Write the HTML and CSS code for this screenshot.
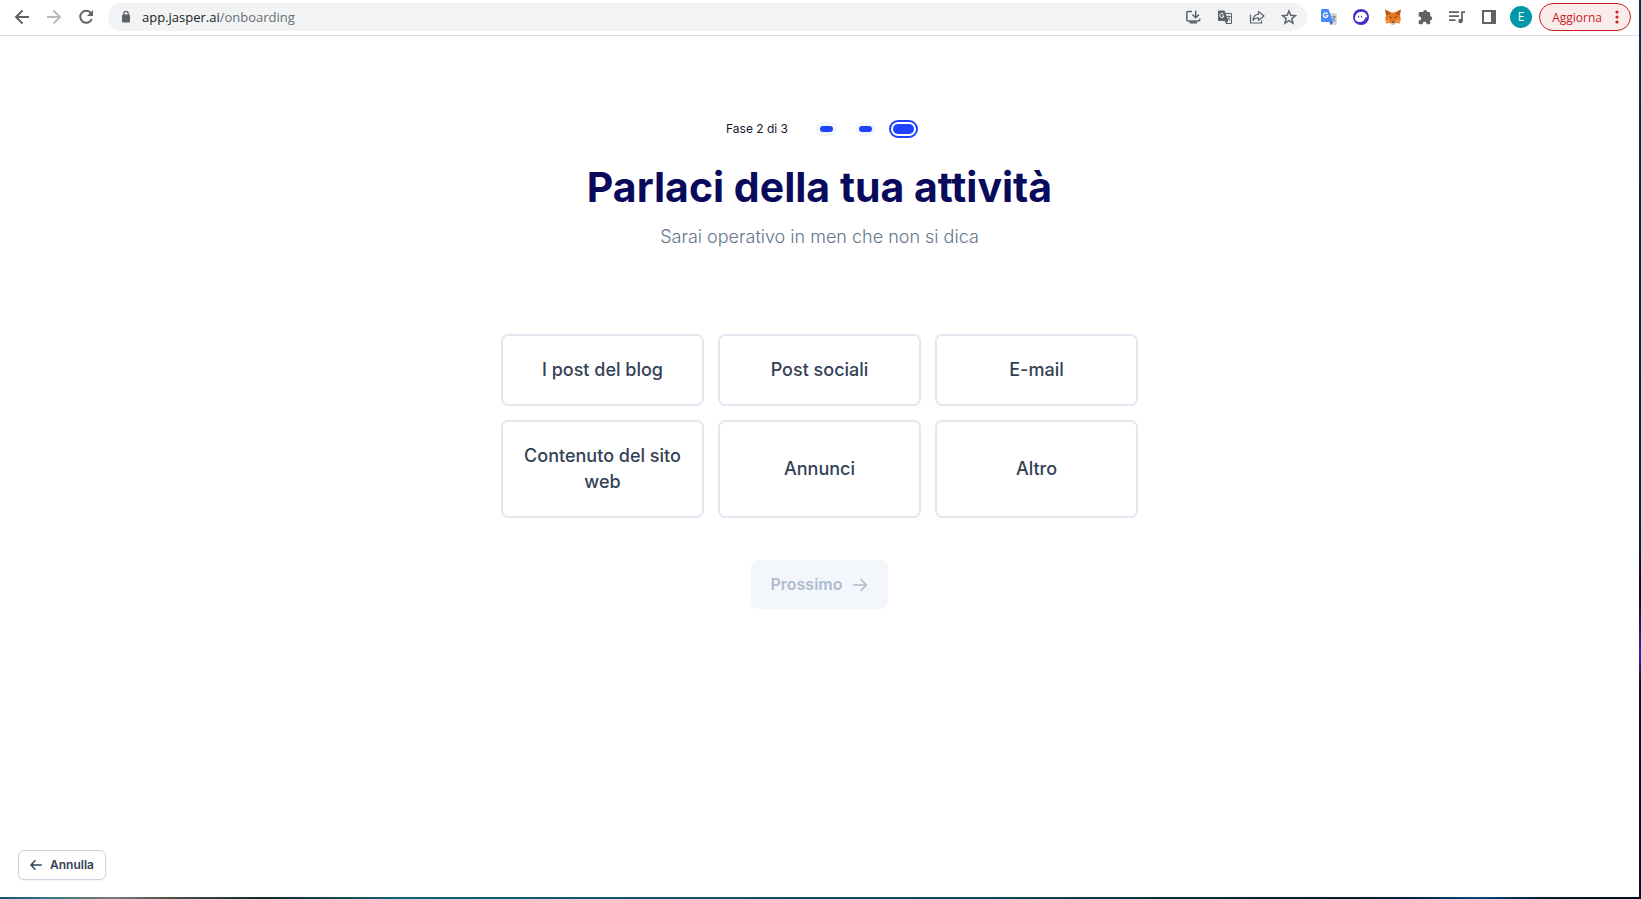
FILE: index.html
```html
<!DOCTYPE html>
<html lang="it">
<head>
<meta charset="utf-8">
<meta name="viewport" content="width=device-width, initial-scale=1">
<title>Jasper onboarding</title>
<link rel="stylesheet" href="styles.css">
</head>
<body>
<div class="desktop">
  <div class="window">
    <header class="toolbar">
      <nav class="group" aria-label="Navigazione">
        <button class="tool" type="button" aria-label="Indietro"><svg width="16" height="16" viewBox="0 0 16 16" fill="none" stroke="#5f6368" stroke-width="2"><path d="M15 8H2.5M8.5 1.5L2 8l6.500 6.500"/></svg></button>
        <button class="tool" type="button" aria-label="Avanti"><svg width="16" height="16" viewBox="0 0 16 16" fill="none" stroke="#babcbe" stroke-width="2"><path d="M1 8h12.500M7.500 1.500L14 8l-6.500 6.500"/></svg></button>
        <button class="tool" type="button" aria-label="Ricarica"><svg width="16" height="16" viewBox="0 0 16 16"><path d="M13.200 4.500A6 6 0 1 0 13.800 10" fill="none" stroke="#5f6368" stroke-width="2"/><path d="M15 1v6H9z" fill="#5f6368"/></svg></button>
      </nav>
      <div class="address">
        <svg class="lock" width="12" height="14" viewBox="0 0 12 14"><rect x="2" y="4.500" width="8" height="8" rx="1" fill="#5f6368"/><path d="M3.800 5V3.500a2.200 2.200 0 0 1 4.400 0V5" fill="none" stroke="#5f6368" stroke-width="1.300"/></svg>
        <a class="url" href="#">app.jasper.ai<span class="path">/onboarding</span></a>
        <div class="group">
          <button class="tool" type="button" aria-label="Installa"><svg width="16" height="16" viewBox="0 0 16 16" fill="none" stroke="#5f6368" stroke-width="1.500"><path d="M7 2.500H3a1.200 1.200 0 0 0-1.200 1.200v7A1.200 1.200 0 0 0 3 11.900h10.500a1.200 1.200 0 0 0 1.200-1.200V9.500M10.700 1.500v7M7.500 5.600l3.200 3.200 3.200-3.200"/><path d="M4.500 13.500h7.500" stroke-width="2"/></svg></button>
          <button class="tool" type="button" aria-label="Traduci"><svg width="16" height="16" viewBox="0 0 16 16"><path d="M2 1.500h5.500l1 2.500H14a1 1 0 0 1 1 1v9a1 1 0 0 1-1 1H9l-1.200-3H2a1 1 0 0 1-1-1v-8.500a1 1 0 0 1 1-1z" fill="#5f6368"/><path d="M8.900 5H14v9H9.800l1.500-2.200z" fill="#f1f3f4"/><path d="M6.600 5.300A2.100 2.100 0 1 0 6.900 7H5" fill="none" stroke="#f1f3f4" stroke-width="1"/><path d="M9.800 7.500h4M11.700 6.500v1M12.900 7.500c-.5 1.800-1.300 2.800-2 3.600M10.700 8.500l2.500 3" fill="none" stroke="#5f6368" stroke-width=".9"/></svg></button>
          <button class="tool" type="button" aria-label="Condividi"><svg width="16" height="16" viewBox="0 0 16 16" fill="none" stroke="#5f6368" stroke-width="1.200"><path d="M1.500 5.500V14h11v-2.500"/><path d="M9.500 2.500L15 7l-5.500 4.300V8.800C7 8.700 5.300 9.500 4 11.300 4.300 8 6.200 5.500 9.500 5.100z" stroke-linejoin="round"/></svg></button>
          <button class="tool" type="button" aria-label="Preferiti"><svg width="16" height="16" viewBox="0 0 16 16" fill="none" stroke="#5f6368" stroke-width="1.500"><path d="M8 2l1.800 4.200 4.600.4-3.500 3 1.100 4.500L8 11.700l-4 2.400 1.100-4.500-3.500-3 4.600-.4z"/></svg></button>
        </div>
      </div>
      <div class="group">
        <button class="tool" type="button" aria-label="Google Traduttore"><svg width="16" height="16" viewBox="0 0 16 16"><path d="M6 4h9a1 1 0 0 1 1 1v10a1 1 0 0 1-1 1H9.500z" fill="#d5d8dc"/><path d="M9.500 16l3-3h-4z" fill="#3367d6"/><path d="M1 0h6.500l4.500 13H1a1 1 0 0 1-1-1V1a1 1 0 0 1 1-1z" fill="#4a8af4"/><path d="M6.500 5A2.200 2.200 0 1 0 6.800 6.500H4.900" fill="none" stroke="#fff" stroke-width="1.200"/><path d="M10.800 7.800h4M12.500 6.500v1.300M13.900 7.800c-.6 2.300-1.500 3.300-2.400 4.200M11.500 9l2.800 3.700" fill="none" stroke="#607d8b" stroke-width="1"/></svg></button>
        <button class="tool" type="button" aria-label="Phantom"><svg width="16" height="16" viewBox="0 0 16 16"><circle cx="8" cy="8" r="8" fill="#4c2bc4"/><path d="M2 9.500C2 5.500 4.700 2.700 8.200 2.700s5.600 2.300 5.900 4.800c.1.700-.3 1-.9 1h-.8c-.5 2.500-2.500 4.500-5.500 4.500C4 13 2 11.800 2 9.500z" fill="#fff"/><path d="M5.600 6.800v1.700M8.500 6.800v1.700" stroke="#4c2bc4" stroke-width="1.100"/></svg></button>
        <button class="tool" type="button" aria-label="MetaMask"><svg width="16" height="16" viewBox="0 0 16 16"><path d="M.3.500L6 3.500h4L15.700.5 15 6l.8 4.500-1.300 4-3.500-.8-1.500 1.800h-3L5 13.700l-3.500.8-1.300-4L1 6z" fill="#e8791c"/><path d="M.3.500L6 4 4.200 5.700 1 6zM15.700.5L10 4l1.800 1.700L15 6z" fill="#b9541c"/><path d="M1 10.500h3.700l.5 3-3.700 1zM15 10.500h-3.700l-.5 3 3.700 1z" fill="#f6953a"/><path d="M4 7.300l2.500 1-.3 1.300zM12 7.300l-2.500 1 .3 1.300z" fill="#30281f"/><path d="M6.200 12.500h3.600l.2 1.800-1 1H7l-1-1z" fill="#d5c5b8"/><path d="M6.700 12.500h2.600v1.200H6.700z" fill="#252525"/></svg></button>
        <button class="tool" type="button" aria-label="Estensioni"><svg width="16" height="16" viewBox="0 0 16 16"><path d="M3 3h3.200a2 2 0 0 1 4 0H12a1.200 1.200 0 0 1 1.200 1.200v3a2 2 0 0 1 0 4v3A1.200 1.200 0 0 1 12 15.300H9.600v-.6a2 2 0 0 0-4 0v.6H3A1.300 1.300 0 0 1 1.700 14v-2.600h.5a2 2 0 0 0 0-4h-.5V4.300A1.300 1.300 0 0 1 3 3z" fill="#5f6368"/></svg></button>
        <button class="tool" type="button" aria-label="Controlli multimediali"><svg width="16" height="16" viewBox="0 0 16 16"><path d="M0 3.200h10M0 7.200h10M0 11.200h6.500" stroke="#5f6368" stroke-width="1.700"/><path d="M16 3.200h-3v9" fill="none" stroke="#5f6368" stroke-width="1.700"/><circle cx="11.500" cy="12" r="2.200" fill="#5f6368"/></svg></button>
        <button class="tool" type="button" aria-label="Riquadro laterale"><svg width="16" height="16" viewBox="0 0 16 16"><path d="M1 1h14v14H1zM3 3v10h7V3z" fill="#5f6368" fill-rule="evenodd"/></svg></button>
        <button class="tool" type="button" aria-label="Profilo"><span class="avatar">E</span></button>
      </div>
      <button class="update" type="button">Aggiorna<svg width="4" height="14" viewBox="0 0 4 14" fill="#c5221f"><circle cx="2" cy="2" r="1.600"/><circle cx="2" cy="7" r="1.600"/><circle cx="2" cy="12" r="1.600"/></svg></button>
    </header>

    <main class="page">
      <div class="progress">
        <span class="step-label">Fase 2 di 3</span>
        <div class="steps">
          <span class="step"></span>
          <span class="step"></span>
          <span class="step current"></span>
        </div>
      </div>
      <h1 class="title">Parlaci della tua attività</h1>
      <p class="subtitle">Sarai operativo in men che non si dica</p>
      <div class="options">
        <button class="option" type="button">I post del blog</button>
        <button class="option" type="button">Post sociali</button>
        <button class="option" type="button">E-mail</button>
        <button class="option" type="button">Contenuto del sito web</button>
        <button class="option" type="button">Annunci</button>
        <button class="option" type="button">Altro</button>
      </div>
      <button class="next" type="button" disabled>Prossimo<svg width="16" height="14" viewBox="0 0 16 14" fill="none" stroke="#afbccf" stroke-width="1.700" stroke-linecap="round" stroke-linejoin="round"><path d="M2 7h12M9 1.500L14.300 7 9 12.500"/></svg></button>
      <button class="cancel" type="button"><svg width="12" height="12" viewBox="0 0 12 12" fill="none" stroke="#334155" stroke-width="1.500" stroke-linecap="round" stroke-linejoin="round"><path d="M11.200 6H1M5 1.700L1 6l4 4.300"/></svg>Annulla</button>
    </main>
  </div>
</div>
</body>
</html>
```
FILE: styles.css
```css
* {
  box-sizing: border-box;
}

body {
  margin: 0;
  font-family: Inter, "Liberation Sans", sans-serif;
}

button {
  margin: 0;
  padding: 0;
  border: 0;
  background: none;
  font-family: inherit;
}

svg {
  display: block;
  flex: none;
}

/* The desktop shows as a thin edge right of and below the window */
.desktop {
  min-height: 100vh;
  padding: 0 2px 2px 0;
  display: flex;
  background:
    linear-gradient(180deg, #00355a 0%, #002540 60%, #031420 66%, #2a2ab0 73%, #031a2a 76%, #021722 100%) right top / 2px 100% no-repeat,
    linear-gradient(90deg, #0d5666 0%, #2d7a88 3%, #5d7673 5%, #737c78 7%, #46584a 10%, #15292c 16%, #0c6470 24%, #094a58 60%, #021a2a 82%, #01243f 86%, #014a80 90%, #021c30 94%, #02101a 100%);
}

.window {
  flex: 1;
  display: flex;
  flex-direction: column;
  background: #fff;
}

.toolbar {
  display: flex;
  align-items: center;
  padding: 3px 8px 4px 6px;
  border-bottom: 1px solid #dadce0;
  font-family: "Open Sans", "Noto Sans", sans-serif;
}

.group {
  display: flex;
  align-items: center;
}

.tool {
  width: 32px;
  height: 28px;
  display: flex;
  align-items: center;
  justify-content: center;
}

.address {
  flex: 1;
  height: 28px;
  margin: 0 6px;
  padding: 0 2px 0 12px;
  display: flex;
  align-items: center;
  border-radius: 14px;
  background: #f1f3f4;
}

.url {
  flex: 1;
  margin-left: 10px;
  color: #202124;
  font-size: 13px;
  text-decoration: none;
}

.path {
  color: #6a6e73;
}

.avatar {
  width: 22px;
  height: 22px;
  border-radius: 50%;
  background: #0097a7;
  color: #fff;
  font-size: 12px;
  line-height: 22px;
  text-align: center;
}

.update {
  height: 28px;
  margin-left: 2px;
  padding: 0 11px 0 12px;
  display: flex;
  align-items: center;
  gap: 13px;
  border: 1px solid #c5221f;
  border-radius: 14px;
  background: #f9eceb;
  color: #c5221f;
  font-size: 12px;
}

.page {
  flex: 1;
  display: flex;
  flex-direction: column;
  align-items: center;
  padding: 84px 18px 17px;
}

.progress {
  display: flex;
  align-items: center;
  gap: 28px;
  padding-left: 5px;
}

.step-label {
  color: #0f172a;
  font-size: 12px;
  line-height: 18px;
}

.steps {
  display: flex;
  align-items: center;
  gap: 18px;
}

.step {
  width: 21px;
  height: 14px;
  border: 4px solid #f1f6fb;
  border-radius: 7px;
  background: #1e42ff;
}

.step::before {
  content: "";
  display: block;
}

.current {
  width: 29px;
  height: 18px;
  margin-left: -5px;
  padding: 2px;
  border: 2px solid #1e42ff;
  border-radius: 9px;
  background: #fff;
}

.current::before {
  height: 100%;
  border-radius: 5px;
  background: #1e42ff;
}

.title {
  margin: 24px 0 0;
  color: #0a0a5c;
  font-size: 41px;
  font-weight: 700;
  line-height: 50px;
}

.subtitle {
  margin: 11px 0 0;
  color: #64748b;
  font-size: 18px;
  font-weight: 300;
  line-height: 28px;
}

.options {
  width: 100%;
  max-width: 637px;
  margin-top: 83px;
  display: grid;
  grid-template-columns: repeat(3, 1fr);
  gap: 14px;
}

.option {
  padding: 21px;
  border: 2px solid #e2e8f0;
  border-radius: 7px;
  color: #334155;
  font-size: 18px;
  font-weight: 500;
  line-height: 26px;
}

.next {
  margin-top: 42px;
  padding: 12px 20px;
  display: flex;
  align-items: center;
  gap: 10px;
  border-radius: 7px;
  background: #f3f7fb;
  color: #afbccf;
  font-size: 16px;
  font-weight: 600;
  line-height: 25px;
}

.cancel {
  align-self: flex-start;
  margin-top: auto;
  padding: 5px 11px;
  display: flex;
  align-items: center;
  gap: 8px;
  border: 1px solid #cbd5e1;
  border-radius: 6px;
  box-shadow: 0 1px 2px #0f172a0d;
  color: #334155;
  font-size: 12px;
  font-weight: 600;
  line-height: 18px;
}
```
